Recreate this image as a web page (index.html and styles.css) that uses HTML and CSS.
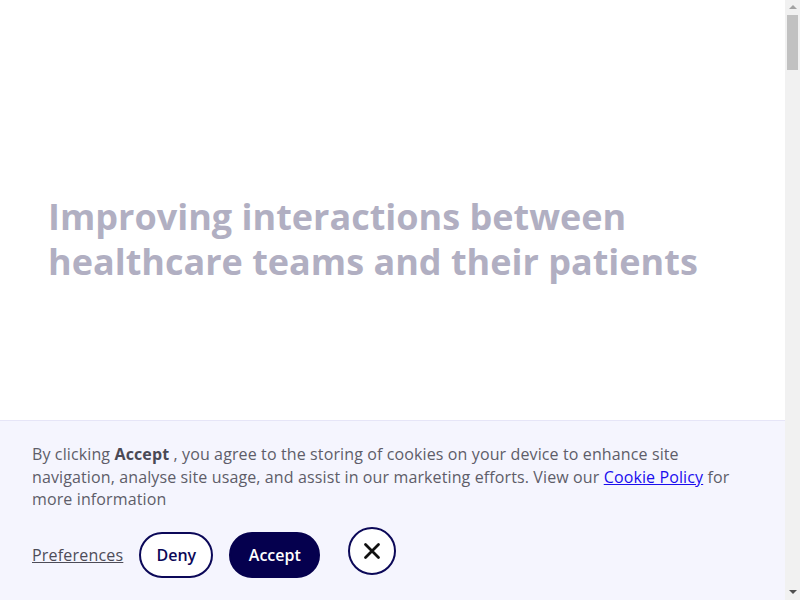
FILE: index.html
```html
<!DOCTYPE html>
<html lang="en">
<head>
<meta charset="utf-8">
<title>Healthcare</title>
<link rel="stylesheet" href="styles.css">
</head>
<body>
<main class="page">
  <section class="hero">
    <h1 class="hero-title">Improving interactions between healthcare teams and their patients</h1>
  </section>
</main>
<div class="cookie-banner">
  <p class="cookie-text">By clicking <strong>Accept</strong> , you agree to the storing of cookies on your device to enhance site navigation, analyse site usage, and assist in our marketing efforts. View our <a href="#" class="cookie-link">Cookie Policy</a> for more information</p>
  <div class="cookie-actions">
    <a href="#" class="pref-link">Preferences</a>
    <button class="btn btn-outline">Deny</button>
    <button class="btn btn-solid">Accept</button>
    <button class="btn-close" aria-label="Close">
      <svg width="20" height="20" viewBox="0 0 20 20"><path d="M3.5 3.5 L16.5 16.5 M16.5 3.5 L3.5 16.5" stroke="#111" stroke-width="2.8" stroke-linecap="round"/></svg>
    </button>
  </div>
</div>
<div class="scrollbar" aria-hidden="true">
  <span class="sb-arrow sb-up"></span>
  <span class="sb-thumb"></span>
  <span class="sb-arrow sb-down"></span>
</div>
</body>
</html>
```
FILE: styles.css
```css
html, body {
  margin: 0;
  padding: 0;
  background: #ffffff;
}
body {
  font-family: "Open Sans", "Liberation Sans", sans-serif;
}
.page {
  min-height: 6200px;
  padding-right: 15px;
}
.hero {
  padding: 194px 48px 0 48px;
}
.hero-title {
  margin: 0;
  font-size: 36px;
  line-height: 45px;
  font-weight: 700;
  color: #b1afc2;
  max-width: 700px;
}
.cookie-banner {
  position: fixed;
  left: 0;
  right: 15px;
  bottom: 0;
  height: 180px;
  box-sizing: border-box;
  background: #f5f5fe;
  border-top: 1px solid #e6e5f7;
  padding: 22px 32px 0 32px;
}
.cookie-text {
  margin: 0;
  font-size: 16px;
  letter-spacing: 0.12px;
  line-height: 22.5px;
  color: #5e5d69;
}
.cookie-text strong {
  color: #4a4955;
}
.cookie-link {
  color: #1a0dee;
}
.cookie-actions {
  display: flex;
  align-items: center;
  margin-top: 21px;
}
.pref-link {
  font-size: 16px;
  letter-spacing: 0.2px;
  color: #4d4c58;
  text-decoration: underline;
  margin-right: 16px;
}
.btn {
  height: 46px;
  border-radius: 23px;
  font-family: inherit;
  font-size: 16px;
  font-weight: 600;
  padding: 0 12px;
  box-sizing: border-box;
  cursor: pointer;
}
.btn-outline {
  background: #ffffff;
  color: #0b0858;
  border: 2px solid #0b0858;
  width: 74px;
  margin-right: 16px;
}
.btn-solid {
  background: #05004e;
  color: #ffffff;
  border: 2px solid #05004e;
  width: 91px;
  margin-right: 28px;
}
.btn-close {
  width: 48px;
  height: 48px;
  border-radius: 50%;
  background: #ffffff;
  border: 2px solid #0b0858;
  display: flex;
  align-items: center;
  justify-content: center;
  padding: 0;
  margin-top: -8px;
  cursor: pointer;
}
.scrollbar {
  position: fixed;
  top: 0;
  right: 0;
  bottom: 0;
  width: 15px;
  background: #f1f1f1;
  display: flex;
  flex-direction: column;
  align-items: center;
}
.sb-arrow {
  width: 0;
  height: 0;
  border-left: 4px solid transparent;
  border-right: 4px solid transparent;
}
.sb-up {
  margin-top: 5px;
  border-bottom: 4px solid #a3a3a3;
}
.sb-down {
  margin-top: auto;
  margin-bottom: 6px;
  border-top: 4px solid #505050;
}
.sb-thumb {
  width: 11px;
  height: 55px;
  margin-top: 6px;
  background: #c1c1c1;
}
```
